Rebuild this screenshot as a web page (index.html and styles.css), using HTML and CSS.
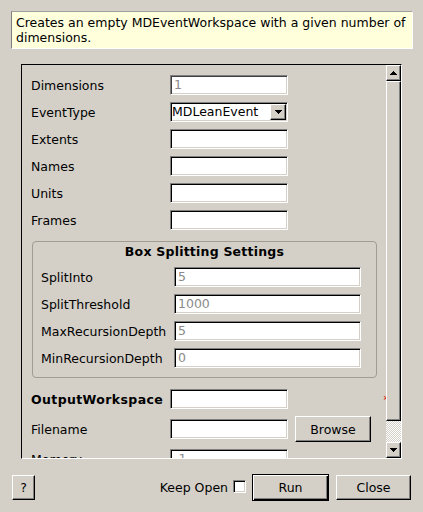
FILE: index.html
```html
<!DOCTYPE html>
<html>
<head>
<meta charset="utf-8">
<link rel="stylesheet" href="styles.css">
</head>
<body>
<div class="dialog">
  <div class="desc">Creates an empty MDEventWorkspace with a given number of dimensions.</div>
  <div class="frame">
    <div class="viewport">
      <div class="form">
        <div class="lbl">Dimensions</div>
        <div class="field dimmed">1</div>

        <div class="lbl">EventType</div>
        <div class="combo">
          <span class="combo-text">MDLeanEvent</span>
          <span class="combo-arrow"><svg width="7" height="4" viewBox="0 0 7 4"><path d="M0 0H7V1H6V2H5V3H4V4H3V3H2V2H1V1H0Z" fill="#000"/></svg></span>
        </div>

        <div class="lbl">Extents</div>
        <div class="field"></div>

        <div class="lbl">Names</div>
        <div class="field"></div>

        <div class="lbl">Units</div>
        <div class="field"></div>

        <div class="lbl">Frames</div>
        <div class="field"></div>

        <div class="group">
          <div class="group-title">Box Splitting Settings</div>
          <div class="group-grid">
            <div class="lbl">SplitInto</div>
            <div class="field">5</div>
            <div class="lbl">SplitThreshold</div>
            <div class="field">1000</div>
            <div class="lbl">MaxRecursionDepth</div>
            <div class="field">5</div>
            <div class="lbl">MinRecursionDepth</div>
            <div class="field">0</div>
          </div>
        </div>

        <div class="lbl bold">OutputWorkspace</div>
        <div class="field"></div>
        <div class="star">*</div>

        <div class="lbl">Filename</div>
        <div class="field"></div>
        <button class="btn browse">Browse</button>

        <div class="lbl">Memory</div>
        <div class="field">-1</div>
      </div>
    </div>
    <div class="vscroll">
      <div class="sb-btn"><svg width="7" height="4" viewBox="0 0 7 4"><path d="M3 0H4V1H5V2H6V3H7V4H0V3H1V2H2V1H3Z" fill="#000"/></svg></div>
      <div class="thumb"></div>
      <div class="track"></div>
      <div class="sb-btn"><svg width="7" height="4" viewBox="0 0 7 4"><path d="M0 0H7V1H6V2H5V3H4V4H3V3H2V2H1V1H0Z" fill="#000"/></svg></div>
    </div>
  </div>
  <div class="footer">
    <button class="btn help">?</button>
    <div class="spacer"></div>
    <span class="keep">Keep Open</span>
    <span class="check"></span>
    <button class="btn run">Run</button>
    <button class="btn close">Close</button>
  </div>
</div>
</body>
</html>
```
FILE: styles.css
```css
* { box-sizing: border-box; }
html, body { margin: 0; padding: 0; }
body {
  background: #d4d0c8;
  font-family: "DejaVu Sans", "Noto Sans", sans-serif;
  font-size: 12.5px;
  line-height: 15px;
  color: #000;
  width: 423px;
  height: 512px;
  overflow: hidden;
}
.dialog { padding: 11px 10px 0 11px; }
.desc {
  width: 402px;
  height: 38px;
  padding: 3px 4px 0 4px;
  background: #ffffdc;
  border: 1px solid;
  border-color: #a0a0a0 #ffffff #ffffff #808080;
}
.frame {
  display: flex;
  width: 381px;
  height: 395px;
  margin: 15px 0 0 10px;
  border: 1px solid;
  border-color: #000 #fff #fff #000;
}
.viewport {
  flex: 1;
  overflow: hidden;
  padding: 10px 0 0 9px;
}
.form {
  display: grid;
  grid-template-columns: 132px 118px 76px 20px;
  column-gap: 7px;
  row-gap: 7px;
  align-items: center;
  width: max-content;
}
.lbl { grid-column: 1; white-space: nowrap; }
.bold { font-weight: bold; letter-spacing: 0.38px; }
.field {
  grid-column: 2;
  height: 20px;
  background: #fff;
  border: 1px solid;
  border-color: #808080 #fff #fff #808080;
  box-shadow: inset 1px 1px 0 #000, inset -1px -1px 0 #d4d0c8;
  padding: 0 0 0 3px;
  line-height: 18px;
  color: #8a8a8a;
  white-space: nowrap;
  overflow: hidden;
}
.field.dimmed { box-shadow: inset 1px 1px 0 #404040, inset -1px -1px 0 #d4d0c8; }
.combo {
  grid-column: 2;
  height: 20px;
  display: flex;
  align-items: center;
  background: #fff;
  border: 1px solid;
  border-color: #808080 #fff #fff #808080;
  box-shadow: inset 1px 1px 0 #000, inset -1px -1px 0 #d4d0c8;
  padding: 1px;
}
.combo-text { flex: 1; line-height: 16px; white-space: nowrap; }
.combo-arrow {
  width: 16px;
  height: 16px;
  display: flex;
  align-items: center;
  justify-content: center;
  background: #d4d0c8;
  border: 1px solid;
  border-color: #fff #000 #000 #fff;
  box-shadow: inset -1px -1px 0 #808080;
}
.group {
  grid-column: 1 / -1;
  width: 345px;
  margin: 4px 0 4px 1px;
  border: 1px solid #a09c94;
  border-radius: 4px;
  padding: 2px 0 9px 0;
}
.group-title { text-align: center; font-weight: bold; letter-spacing: 0.22px; }
.group-grid {
  display: grid;
  grid-template-columns: 126px 187px;
  column-gap: 7px;
  row-gap: 7px;
  align-items: center;
  margin: 8px 0 0 8px;
}
.star { grid-column: 4; color: #d00000; padding-left: 5.5px; }
.btn {
  font: inherit;
  color: #000;
  padding: 0;
  margin: 0;
  background: #d4d0c8;
  border: 1px solid;
  border-color: #fff #000 #000 #fff;
  box-shadow: inset -1px -1px 0 #808080;
  text-align: center;
}
.browse { grid-column: 3; width: 76px; height: 26px; }
.vscroll { width: 15px; display: flex; flex-direction: column; }
.sb-btn {
  height: 16px;
  display: flex;
  align-items: center;
  justify-content: center;
  background: #d4d0c8;
  border: 1px solid;
  border-color: #fff #000 #000 #fff;
  box-shadow: inset -1px -1px 0 #808080;
}
.thumb {
  height: 340px;
  background: #d4d0c8;
  border: 1px solid;
  border-color: #fff #000 #000 #fff;
  box-shadow: inset -1px -1px 0 #808080;
}
.track {
  flex: 1;
  background: repeating-conic-gradient(#ffffff 0 25%, #d4d0c8 0 50%) 0 0 / 2px 2px;
}
.footer {
  display: flex;
  align-items: center;
  height: 27px;
  margin: 15px 2px 0 1px;
}
.help { width: 23px; height: 25px; }
.spacer { flex: 1; }
.keep { white-space: nowrap; }
.check {
  width: 13px;
  height: 13px;
  margin: 0 0 3px 5px;
  background: #fff;
  border: 1px solid;
  border-color: #808080 #fff #fff #808080;
  box-shadow: inset 1px 1px 0 #000, inset -1px -1px 0 #d4d0c8;
}
.run {
  width: 77px;
  height: 27px;
  margin-left: 6px;
  border: 1px solid #000;
  box-shadow: inset 1px 1px 0 #fff, inset -1px -1px 0 #000, inset -2px -2px 0 #808080;
}
.close { width: 75px; height: 25px; margin-left: 7px; }
```
